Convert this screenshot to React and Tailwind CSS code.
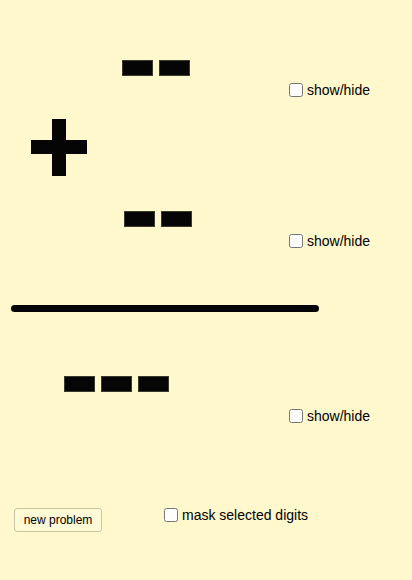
import React from "react";

const Block = () => (
  <div className="w-[31px] h-[16px] bg-[#050505] border border-[#3a3a30]" />
);

const Check = ({ label }) => (
  <label className="flex items-center gap-[4px] h-[14px] text-[14px] leading-none text-black whitespace-nowrap">
    <input
      type="checkbox"
      className="m-0 w-[14px] h-[14px] shrink-0"
    />
    <span>{label}</span>
  </label>
);

export default function App() {
  return (
    <div
      className="w-[412px] h-[580px] bg-[#fff8cc] flex flex-col overflow-hidden"
      style={{ fontFamily: '"Liberation Sans", Arial, sans-serif' }}
    >
      {/* first number */}
      <div className="h-[119px] flex items-start shrink-0">
        <div className="ml-[122px] mt-[60px] flex gap-[6px]">
          <Block />
          <Block />
        </div>
        <div className="ml-[99px] mt-[83px]">
          <Check label="show/hide" />
        </div>
      </div>

      {/* plus sign */}
      <div className="h-[92px] pl-[31px] shrink-0">
        <svg width="56" height="57" viewBox="0 0 56 57">
          <rect x="21" y="0" width="14" height="57" fill="#050505" />
          <rect x="0" y="21" width="56" height="14" fill="#050505" />
        </svg>
      </div>

      {/* second number */}
      <div className="h-[94px] flex items-start shrink-0">
        <div className="ml-[124px] flex gap-[6px]">
          <Block />
          <Block />
        </div>
        <div className="ml-[97px] mt-[23px]">
          <Check label="show/hide" />
        </div>
      </div>

      {/* sum line */}
      <div className="ml-[11px] w-[308px] h-[7px] rounded-full bg-[#050505] shrink-0" />

      {/* result */}
      <div className="h-[196px] flex items-start shrink-0">
        <div className="ml-[64px] mt-[64px] flex gap-[6px]">
          <Block />
          <Block />
          <Block />
        </div>
        <div className="ml-[120px] mt-[97px]">
          <Check label="show/hide" />
        </div>
      </div>

      {/* controls */}
      <div className="flex items-start shrink-0">
        <button className="ml-[14px] w-[88px] h-[24px] rounded-[3px] border border-[#cbc4a4] bg-[#fffad6] text-[12px] leading-none text-black flex items-center justify-center">
          new problem
        </button>
        <div className="ml-[62px]">
          <Check label="mask selected digits" />
        </div>
      </div>
    </div>
  );
}
